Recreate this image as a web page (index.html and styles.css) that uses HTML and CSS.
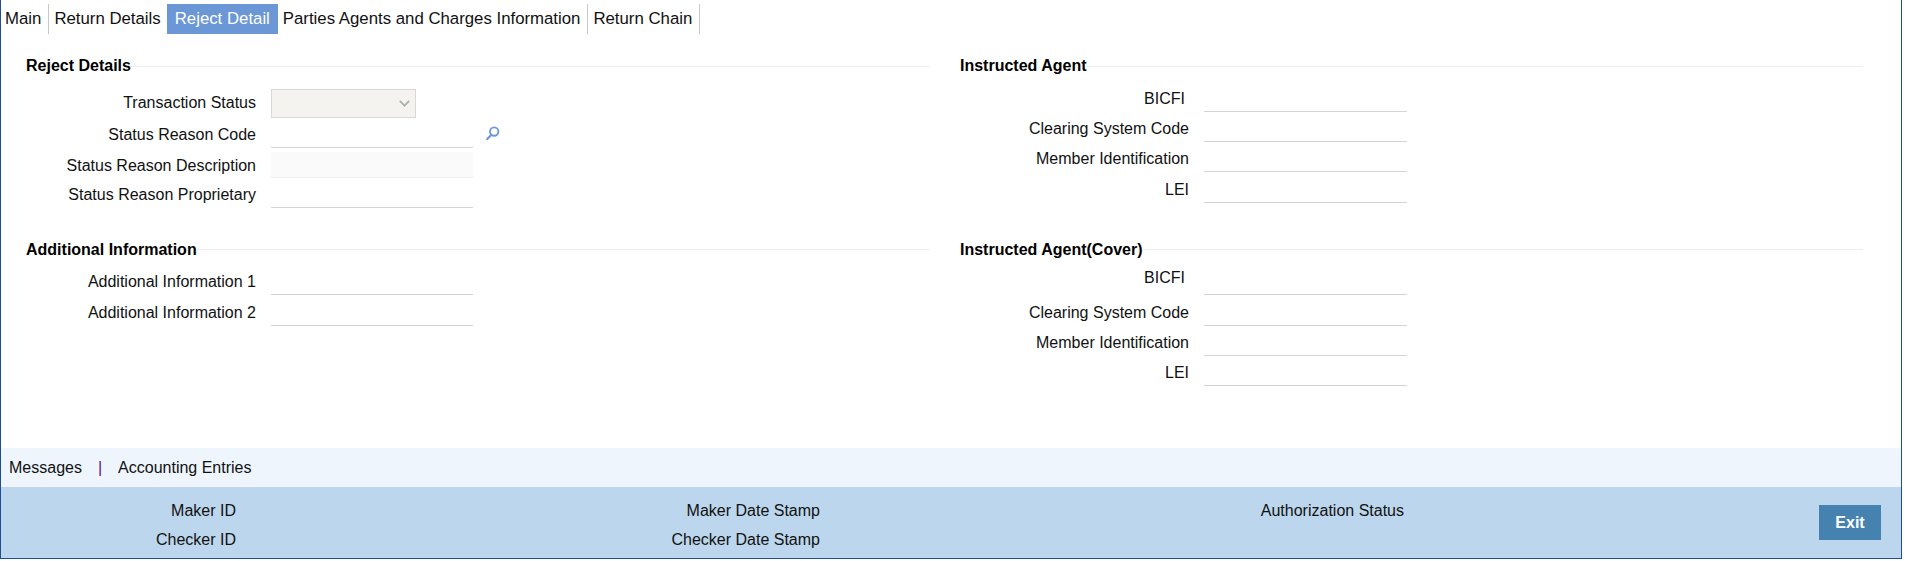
FILE: index.html
```html
<!DOCTYPE html>
<html lang="en">
<head>
<meta charset="utf-8">
<title>Reject Detail</title>
<link rel="stylesheet" href="styles.css">
</head>
<body>
<div class="frame">
  <nav class="tabs">
    <a class="tab tab-first">Main</a>
    <a class="tab tab-plain">Return Details</a>
    <a class="tab tab-active">Reject Detail</a>
    <a class="tab">Parties Agents and Charges Information</a>
    <a class="tab">Return Chain</a>
  </nav>
  <main class="content">
    <section class="section">
      <h2 class="heading"><span>Reject Details</span></h2>
      <div class="fields fields-low">
        <div class="field"><label class="label label-flat">Transaction Status</label>
          <div class="select"><svg class="chevron" viewBox="0 0 11 7" width="11" height="7"><path d="M0.8 0.8L5.5 5.6L10.2 0.8" fill="none" stroke="#a9b3b0" stroke-width="1.9"/></svg></div>
        </div>
        <div class="field"><label class="label">Status Reason Code</label>
          <input class="input" type="text">
          <svg class="search" viewBox="0 0 14 14" width="14" height="14"><circle cx="8.2" cy="5.6" r="4.2" fill="none" stroke="#6b97d6" stroke-width="1.9"/><path d="M5.2 9L1.2 13" fill="none" stroke="#6b97d6" stroke-width="2.2" stroke-linecap="round"/></svg>
        </div>
        <div class="field"><label class="label label-low">Status Reason Description</label><input class="input input-readonly" type="text" readonly></div>
        <div class="field"><label class="label">Status Reason Proprietary</label><input class="input" type="text"></div>
      </div>
    </section>
    <section class="section">
      <h2 class="heading"><span>Instructed Agent</span></h2>
      <div class="fields fields-right">
        <div class="field"><label class="label label-inset">BICFI</label><input class="input" type="text"></div>
        <div class="field"><label class="label">Clearing System Code</label><input class="input" type="text"></div>
        <div class="field"><label class="label">Member Identification</label><input class="input" type="text"></div>
        <div class="field field-tall"><label class="label">LEI</label><input class="input" type="text"></div>
      </div>
    </section>
    <section class="section">
      <h2 class="heading heading-snug"><span>Additional Information</span></h2>
      <div class="fields fields-tight">
        <div class="field"><label class="label">Additional Information 1</label><input class="input" type="text"></div>
        <div class="field field-tall"><label class="label">Additional Information 2</label><input class="input" type="text"></div>
      </div>
    </section>
    <section class="section">
      <h2 class="heading heading-snug"><span>Instructed Agent(Cover)</span></h2>
      <div class="fields fields-right fields-tight">
        <div class="field"><label class="label label-inset label-up">BICFI</label><input class="input" type="text"></div>
        <div class="field field-tall"><label class="label">Clearing System Code</label><input class="input" type="text"></div>
        <div class="field"><label class="label">Member Identification</label><input class="input" type="text"></div>
        <div class="field"><label class="label">LEI</label><input class="input" type="text"></div>
      </div>
    </section>
  </main>
  <div class="links">
    <a class="link">Messages</a>
    <span class="divider">|</span>
    <a class="link">Accounting Entries</a>
  </div>
  <footer class="audit">
    <div class="audit-grid">
      <span class="audit-label">Maker ID</span>
      <span class="audit-label">Maker Date Stamp</span>
      <span class="audit-label">Authorization Status</span>
      <span class="audit-label">Checker ID</span>
      <span class="audit-label">Checker Date Stamp</span>
    </div>
    <button class="exit" type="button">Exit</button>
  </footer>
</div>
</body>
</html>
```
FILE: styles.css
```css
* { box-sizing: border-box; }
html, body { margin: 0; background: #fff; }
body {
  font-family: "Liberation Sans", Arial, sans-serif;
  font-size: 16px;
  color: #111;
}
.frame {
  width: 1902px;
  height: 559px;
  display: flex;
  flex-direction: column;
  border-left: 1px solid #1f4e96;
  border-right: 1px solid #1f4e96;
  border-bottom: 1px solid #1f4e96;
}
.tabs {
  display: flex;
  margin-top: 4px;
  height: 30px;
  font-size: 16.8px;
}
.tab {
  display: flex;
  align-items: center;
  padding: 0 7px 0 5px;
  border-right: 1px solid #c8c8c8;
}
.tab-first { padding-left: 4px; }
.tab-plain { border-right: 0; padding-right: 6px; }
.tab-active {
  background: #6b97d6;
  color: #fff;
  padding: 0 8px;
  border-right: 0;
}
.content {
  flex: 1;
  display: grid;
  grid-template-columns: 904px 903px;
  grid-template-rows: 184px 1fr;
  column-gap: 30px;
  padding: 20px 0 0 25px;
}
.heading {
  margin: 0;
  height: 24px;
  font-size: 16px;
  font-weight: bold;
  display: flex;
  align-items: center;
  color: #000;
}
.heading::after {
  content: "";
  flex: 1;
  height: 1px;
  background: #eee;
}
.heading-snug::after { margin-top: -1px; }
.fields { margin-top: 4px; }
.fields-low { margin-top: 10px; }
.fields-tight { margin-top: 3px; }
.field {
  display: grid;
  grid-template-columns: 230px 202px auto;
  column-gap: 15px;
  height: 30px;
  align-items: center;
  justify-content: start;
}
.fields-right { margin-left: -1px; }
.fields-right .field { grid-template-columns: 230px 203px; }
.field-tall { height: 31px; }
.label { text-align: right; padding-top: 4px; }
.label-flat { padding-top: 0; }
.label-low { padding-top: 6px; }
.label-inset { padding-right: 4px; }
.label-up { padding-top: 0; margin-top: -4px; }
.input {
  width: 100%;
  height: 100%;
  align-self: stretch;
  border: 0;
  border-bottom: 1px solid #d4d4d4;
  background: transparent;
  font: inherit;
  padding: 0 4px;
  outline: 0;
}
.input-readonly {
  background: #fafafa;
  border-bottom-color: #eee;
  height: 26px;
  align-self: end;
}
.select {
  width: 145px;
  height: 29px;
  background: #f4f3ef;
  border: 1px solid #d8d8d8;
  display: flex;
  align-items: center;
  justify-content: flex-end;
  padding-right: 5px;
}
.chevron { display: block; }
.search { margin-left: -2px; display: block; }
.links {
  height: 39px;
  background: #eef5fd;
  display: flex;
  align-items: center;
  padding-left: 8px;
}
.divider { color: #5b1a7a; margin: 0 16px 0 16px; }
.audit {
  height: 71px;
  background: #bcd7ed;
  display: flex;
  justify-content: space-between;
  align-items: flex-start;
  padding: 9px 20px 0 0;
}
.audit-grid {
  display: grid;
  grid-template-columns: 235px 584px 584px;
  grid-auto-rows: 29px;
  align-items: center;
}
.audit-label { text-align: right; }
.exit {
  width: 62px;
  height: 35px;
  margin-top: 9px;
  border: 0;
  padding: 0;
  background: #4682b0;
  color: #fff;
  font-family: inherit;
  font-size: 16px;
  font-weight: bold;
}
```
